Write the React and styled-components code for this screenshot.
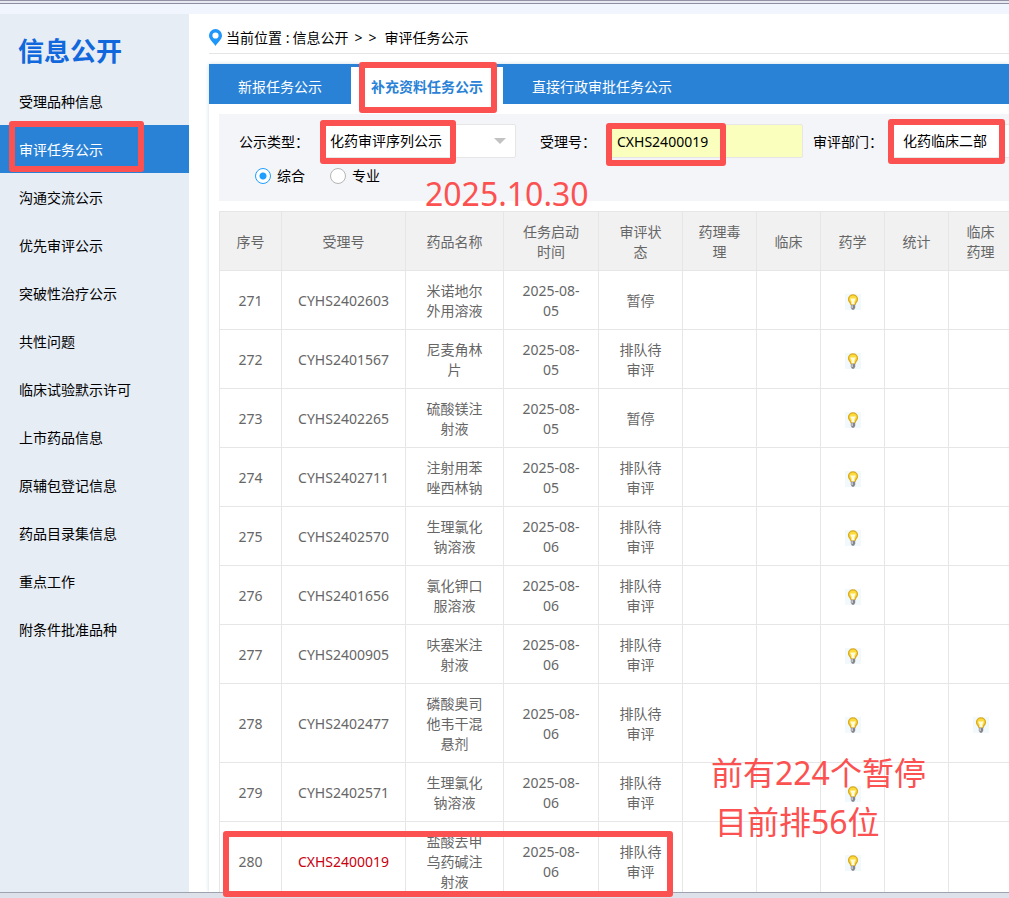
import React from "react";
import styled, { createGlobalStyle, css } from "styled-components";

const menu = [
  "受理品种信息",
  "审评任务公示",
  "沟通交流公示",
  "优先审评公示",
  "突破性治疗公示",
  "共性问题",
  "临床试验默示许可",
  "上市药品信息",
  "原辅包登记信息",
  "药品目录集信息",
  "重点工作",
  "附条件批准品种",
];

const tabs = ["新报任务公示", "补充资料任务公示", "直接行政审批任务公示"];

const columns = [
  { title: "序号", width: 62 },
  { title: "受理号", width: 124 },
  { title: "药品名称", width: 98 },
  { title: "任务启动时间", width: 95 },
  { title: "审评状态", width: 84 },
  { title: "药理毒理", width: 74 },
  { title: "临床", width: 64 },
  { title: "药学", width: 64 },
  { title: "统计", width: 64 },
  { title: "临床药理", width: 64 },
];

const rows = [
  { id: 271, code: "CYHS2402603", name: "米诺地尔外用溶液", date: "2025-08-05", status: "暂停" },
  { id: 272, code: "CYHS2401567", name: "尼麦角林片", date: "2025-08-05", status: "排队待审评" },
  { id: 273, code: "CYHS2402265", name: "硫酸镁注射液", date: "2025-08-05", status: "暂停" },
  { id: 274, code: "CYHS2402711", name: "注射用苯唑西林钠", date: "2025-08-05", status: "排队待审评" },
  { id: 275, code: "CYHS2402570", name: "生理氯化钠溶液", date: "2025-08-06", status: "排队待审评" },
  { id: 276, code: "CYHS2401656", name: "氯化钾口服溶液", date: "2025-08-06", status: "排队待审评" },
  { id: 277, code: "CYHS2400905", name: "呋塞米注射液", date: "2025-08-06", status: "排队待审评" },
  { id: 278, code: "CYHS2402477", name: "磷酸奥司他韦干混悬剂", date: "2025-08-06", status: "排队待审评", clinical: true },
  { id: 279, code: "CYHS2402571", name: "生理氯化钠溶液", date: "2025-08-06", status: "排队待审评" },
  { id: 280, code: "CXHS2400019", name: "盐酸去甲乌药碱注射液", date: "2025-08-06", status: "排队待审评", found: true },
];

const Bulb = () => (
  <BulbIcon viewBox="0 0 16 16" role="img" aria-label="审评中">
    <rect width="16" height="16" fill="#f1f9fd" />
    <path
      d="M8 .3a5.100 5.100 0 0 0-5.100 5c0 2.300 1.700 3.200 2.600 5.700h5c.9-2.500 2.600-3.400 2.600-5.700A5.100 5.100 0 0 0 8 .3z"
      fill="#dba91d"
    />
    <path d="M8 1.600a3.800 3.800 0 0 0-3.800 3.700c0 1.700 1.600 2.500 2.200 4.900h3.200c.6-2.400 2.200-3.200 2.200-4.900A3.800 3.800 0 0 0 8 1.600z" fill="#fbdc3c" />
    <path d="M5.200 4.600h5.600L9.400 7.400v3.200H6.600V7.400z" fill="#fffbe4" />
    <path d="M5.800 10.800h4.400v3L9 15.800H7l-1.200-2z" fill="#85878d" />
    <path d="M6.400 11.300h1.500v2.800H6.400z" fill="#c9cbd0" />
  </BulbIcon>
);

const Pin = () => (
  <PinIcon viewBox="0 0 13 17" aria-hidden="true">
    <path
      fillRule="evenodd"
      d="M6.500 0A6.500 6.500 0 0 0 0 6.500C0 10.300 4 13 6.500 17 9 13 13 10.300 13 6.500A6.500 6.500 0 0 0 6.500 0zm0 3.400a3.100 3.100 0 1 1 0 6.200 3.100 3.100 0 0 1 0-6.200z"
      fill="#1e96fa"
    />
  </PinIcon>
);

const App = () => {
  return (
    <>
      <GlobalStyle />
      <Page>
        <TopStrip />
        <Body>
          <Sidebar>
            <h2>信息公开</h2>
            <nav>
              {menu.map((item) => (
                <MenuLink key={item} href="#" $active={item === "审评任务公示"}>
                  {item}
                </MenuLink>
              ))}
            </nav>
          </Sidebar>
          <Main>
            <Breadcrumb>
              <Pin />
              <span>当前位置 :</span>
              <a href="#">信息公开</a>
              <i>&gt;</i>
              <i>&gt;</i>
              <a href="#">审评任务公示</a>
            </Breadcrumb>
            <Panel>
              <TabBar role="tablist">
                {tabs.map((tab, index) => (
                  <Tab key={tab} type="button" role="tab" aria-selected={index === 1} $active={index === 1}>
                    {tab}
                  </Tab>
                ))}
              </TabBar>
              <Content>
                <Filter>
                  <Fields>
                    <Label htmlFor="type" $width={101} $indent={20}>公示类型：</Label>
                    <SelectBox>
                      <select id="type">
                        <option>化药审评序列公示</option>
                      </select>
                    </SelectBox>
                    <Label htmlFor="code" $width={91} $indent={24}>受理号：</Label>
                    <TextInput id="code" type="text" defaultValue="CXHS2400019" />
                    <Label htmlFor="dept" $width={90} $indent={10}>审评部门：</Label>
                    <SelectBox>
                      <select id="dept">
                        <option>化药临床二部</option>
                      </select>
                    </SelectBox>
                  </Fields>
                  <Radios>
                    <label>
                      <input type="radio" name="sort" defaultChecked />
                      综合
                    </label>
                    <label>
                      <input type="radio" name="sort" />
                      专业
                    </label>
                  </Radios>
                </Filter>
                <Table>
                  <colgroup>
                    {columns.map((col) => (
                      <Col key={col.title} $width={col.width} />
                    ))}
                  </colgroup>
                  <thead>
                    <tr>
                      {columns.map((col) => (
                        <th key={col.title}>{col.title}</th>
                      ))}
                    </tr>
                  </thead>
                  <tbody>
                    {rows.map((row) => (
                      <tr key={row.id}>
                        <td>{row.id}</td>
                        <CodeCell $found={row.found}>{row.code}</CodeCell>
                        <td>{row.name}</td>
                        <td>{row.date}</td>
                        <td>{row.status}</td>
                        <td />
                        <td />
                        <td><Bulb /></td>
                        <td />
                        <td>{row.clinical && <Bulb />}</td>
                      </tr>
                    ))}
                  </tbody>
                </Table>
              </Content>
            </Panel>
          </Main>
        </Body>
        <StatusBar />

        {/* hand-drawn marks over the page */}
        <Mark $x={9} $y={121} $w={135} $h={51} />
        <Mark $x={359} $y={62} $w={138} $h={51} />
        <Mark $x={320} $y={120} $w={136} $h={44} />
        <Mark $x={606} $y={123} $w={120} $h={43} />
        <Mark $x={888} $y={119} $w={117} $h={45} />
        <Mark $x={223} $y={831} $w={450} $h={66} />
        <Note $x={425} $y={170}>2025.10.30</Note>
        <Note $x={711} $y={749}>前有224个暂停</Note>
        <Note $x={715} $y={798}>目前排56位</Note>
      </Page>
    </>
  );
};

const GlobalStyle = createGlobalStyle`
  * {
    box-sizing: border-box;
  }
  body {
    margin: 0;
    font: 14px/20px "Noto Sans", "Noto Sans CJK SC", sans-serif;
    color: #000;
    background: #fff;
  }
  a {
    color: inherit;
    text-decoration: none;
  }
  input,
  select,
  button {
    font: inherit;
    color: inherit;
  }
`;

const Page = styled.div`
  position: relative;
  display: flex;
  flex-direction: column;
  height: 100vh;
  overflow: hidden;
`;

const TopStrip = styled.header`
  flex: none;
  height: 14px;
  border-top: 1px solid #9494a4;
  background: linear-gradient(#e6e8f2 2px, #8e90a2 2px, #8e90a2 3px, #f1f6fe 3px);
`;

const StatusBar = styled.footer`
  flex: none;
  height: 6px;
  border-top: 1px solid #9fa3b0;
  background: #dde2ea;
`;

const Body = styled.div`
  flex: 1;
  min-height: 0;
  display: flex;
`;

const Sidebar = styled.aside`
  flex: none;
  width: 189px;
  background: #e6edf5;

  h2 {
    margin: 0;
    padding: 17px 18px 6px;
    font-size: 26px;
    line-height: 40px;
    color: #1167dc;
  }
`;

const MenuLink = styled.a`
  display: block;
  padding: 2px 0 0 19px;
  line-height: 46px;
  ${({ $active }) =>
    $active &&
    css`
      color: #fff;
      background: #2a82d7;
    `}
`;

const Main = styled.main`
  flex: 1;
  min-width: 0;
  padding-left: 20px;
  display: flex;
  flex-direction: column;
`;

const Breadcrumb = styled.div`
  flex: none;
  display: flex;
  align-items: center;
  height: 40px;
  padding-top: 8px;
  border-bottom: 1px solid #e5e5e5;

  span {
    margin: 0 3px 0 4px;
  }
  i {
    width: 14px;
    text-align: right;
    font-style: normal;
  }
  i + a {
    margin-left: 8px;
  }
`;

const PinIcon = styled.svg`
  width: 13px;
  height: 17px;
`;

const Panel = styled.section`
  flex: 1;
  min-height: 0;
  margin-top: 10px;
  box-shadow: 0 0 4px #c9dbe9;
`;

const TabBar = styled.div`
  display: flex;
  height: 40px;
  background: #2a82d7;
`;

const Tab = styled.button`
  padding: 6px 29px 0;
  border: 0;
  color: #fff;
  background: none;
  ${({ $active }) =>
    $active &&
    css`
      padding: 2px 20px 0;
      border-top: 3px solid #2a82d7;
      font-weight: bold;
      color: #2a82d7;
      background: #fff;
    `}
`;

const Content = styled.div`
  padding: 10px 0 0 10px;
  overflow: hidden;
`;

const Filter = styled.form`
  margin-bottom: 10px;
  padding: 10px 0 15px;
  background: #f4f5f9;
`;

const Fields = styled.div`
  display: flex;
  align-items: center;
`;

const Label = styled.label`
  flex: none;
  width: ${({ $width }) => $width}px;
  padding: 2px 0 0 ${({ $indent }) => $indent}px;
`;

const field = css`
  width: 196px;
  height: 34px;
  padding: 0 9px;
  border: 1px solid #e6e6e6;
  border-radius: 2px;
  background: #fff;
`;

const SelectBox = styled.div`
  position: relative;
  flex: none;

  select {
    ${field}
    display: block;
    appearance: none;
  }
  &::after {
    content: "";
    position: absolute;
    top: 14px;
    right: 10px;
    border: 6px solid transparent;
    border-top-color: #c2c2c2;
    border-bottom: 0;
    pointer-events: none;
  }
`;

const TextInput = styled.input`
  ${field}
  flex: none;
  background: #faffbd;
`;

const Radios = styled.div`
  display: flex;
  gap: 25px;
  padding: 8px 0 0 36px;

  label {
    display: flex;
    align-items: center;
    gap: 6px;
  }
  input {
    appearance: none;
    width: 16px;
    height: 16px;
    margin: 0;
    border: 1px solid #b5b5b5;
    border-radius: 50%;
    background: #fff;
  }
  input:checked {
    border-color: #1e9fff;
    background: radial-gradient(circle, #1e9fff 3px, #fff 4px);
  }
`;

const Table = styled.table`
  width: 100%;
  min-width: 794px;
  table-layout: fixed;
  border-collapse: collapse;
  color: #666;

  th,
  td {
    padding: 10px 15px 8px;
    border: 1px solid #e6e6e6;
    font-weight: 400;
    text-align: center;
  }
  th {
    background: #f1f1f1;
  }
`;

const Col = styled.col`
  width: ${({ $width }) => $width}px;
`;

const CodeCell = styled.td`
  white-space: nowrap;
  color: ${({ $found }) => ($found ? "#c9000f" : "inherit")};
`;

const BulbIcon = styled.svg`
  display: block;
  width: 16px;
  height: 16px;
  margin: 2px auto 0;
`;

const Mark = styled.div`
  position: absolute;
  left: ${({ $x }) => $x}px;
  top: ${({ $y }) => $y}px;
  width: ${({ $w }) => $w}px;
  height: ${({ $h }) => $h}px;
  border: 6px solid #fc5151;
  border-radius: 3px;
  pointer-events: none;
`;

const Note = styled.div`
  position: absolute;
  left: ${({ $x }) => $x}px;
  top: ${({ $y }) => $y}px;
  font-size: 32px;
  line-height: 48px;
  white-space: nowrap;
  color: #fc5151;
  pointer-events: none;
`;

export default App;
